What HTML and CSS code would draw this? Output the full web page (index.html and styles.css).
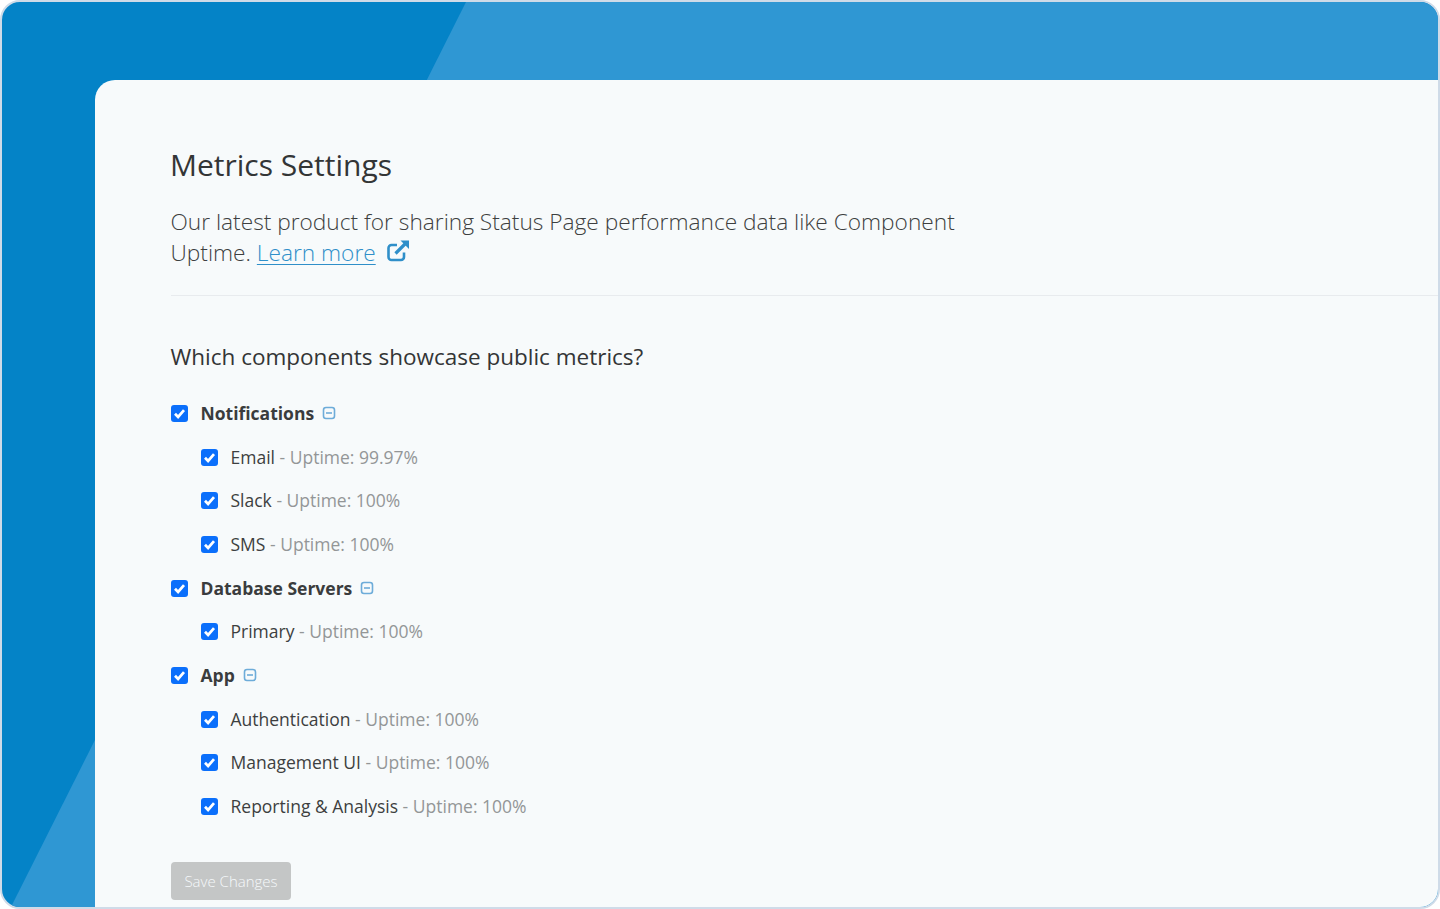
FILE: index.html
```html
<!DOCTYPE html>
<html lang="en">
<head>
  <meta charset="UTF-8">
  <meta name="viewport" content="width=device-width, initial-scale=1.0">
  <title>Metrics Settings</title>
  <link rel="stylesheet" href="styles.css">
</head>
<body>

  <div class="frame">
    <div class="card">
      <h1>Metrics Settings</h1>
      <p class="intro">
        Our latest product for sharing Status Page performance data like Component<br>
        Uptime. <a href="#">Learn more</a>
        <svg class="ext-icon" viewBox="0 0 24 24" width="24" height="24" fill="none" stroke="#2f8fc9" stroke-width="2.6">
          <path d="M18 13.5V18a3 3 0 0 1-3 3H5.5a3 3 0 0 1-3-3V9a3 3 0 0 1 3-3H11"/>
          <path d="M9.5 14.5 19 5" stroke-width="3.2"/>
          <path d="M14.5 1.5H23V10Z" fill="#2f8fc9" stroke="none"/>
        </svg>
      </p>
      <hr>
      <h2>Which components showcase public metrics?</h2>

      <ul class="tree">
        <li class="group">
          <span class="box"><svg viewBox="0 0 17 17"><path d="M4 8.8 7.1 12 13 5.2"/></svg></span>
          <b>Notifications</b>
          <svg class="collapse" viewBox="0 0 14 14"><rect x="1.5" y="1.5" width="11" height="11" rx="2.5"/><path d="M4 7h6"/></svg>
        </li>
        <li class="child">
          <span class="box"><svg viewBox="0 0 17 17"><path d="M4 8.8 7.1 12 13 5.2"/></svg></span>
          <span>Email <em>- Uptime: 99.97%</em></span>
        </li>
        <li class="child">
          <span class="box"><svg viewBox="0 0 17 17"><path d="M4 8.8 7.1 12 13 5.2"/></svg></span>
          <span>Slack <em>- Uptime: 100%</em></span>
        </li>
        <li class="child">
          <span class="box"><svg viewBox="0 0 17 17"><path d="M4 8.8 7.1 12 13 5.2"/></svg></span>
          <span>SMS <em>- Uptime: 100%</em></span>
        </li>
        <li class="group">
          <span class="box"><svg viewBox="0 0 17 17"><path d="M4 8.8 7.1 12 13 5.2"/></svg></span>
          <b>Database Servers</b>
          <svg class="collapse" viewBox="0 0 14 14"><rect x="1.5" y="1.5" width="11" height="11" rx="2.5"/><path d="M4 7h6"/></svg>
        </li>
        <li class="child">
          <span class="box"><svg viewBox="0 0 17 17"><path d="M4 8.8 7.1 12 13 5.2"/></svg></span>
          <span>Primary <em>- Uptime: 100%</em></span>
        </li>
        <li class="group">
          <span class="box"><svg viewBox="0 0 17 17"><path d="M4 8.8 7.1 12 13 5.2"/></svg></span>
          <b>App</b>
          <svg class="collapse" viewBox="0 0 14 14"><rect x="1.5" y="1.5" width="11" height="11" rx="2.5"/><path d="M4 7h6"/></svg>
        </li>
        <li class="child">
          <span class="box"><svg viewBox="0 0 17 17"><path d="M4 8.8 7.1 12 13 5.2"/></svg></span>
          <span>Authentication <em>- Uptime: 100%</em></span>
        </li>
        <li class="child">
          <span class="box"><svg viewBox="0 0 17 17"><path d="M4 8.8 7.1 12 13 5.2"/></svg></span>
          <span>Management UI <em>- Uptime: 100%</em></span>
        </li>
        <li class="child">
          <span class="box"><svg viewBox="0 0 17 17"><path d="M4 8.8 7.1 12 13 5.2"/></svg></span>
          <span>Reporting &amp; Analysis <em>- Uptime: 100%</em></span>
        </li>
      </ul>

      <button class="save" type="button" disabled>Save Changes</button>
    </div>
  </div>

</body>
</html>
```

FILE: styles.css
```css
html, body {
  margin: 0;
  height: 100%;
  background: #fff;
}
body {
  font-family: "Open Sans", sans-serif;
  color: #3d3f40;
  overflow: hidden;
}

/* Blue window with the lighter diagonal band behind the card */
.frame {
  position: relative;
  box-sizing: border-box;
  height: 909px;
  padding: 78px 0 0 93px;
  background: #0483c7;
  border: 2px solid #cfdbe8;
  border-radius: 20px;
  overflow: hidden;
}
.frame::before {
  content: "";
  position: absolute;
  inset: 0;
  background: #2f97d3;
  clip-path: polygon(464px 0, 100% 0, 100% 100%, 9px 100%);
}

.card {
  position: relative;
  box-sizing: border-box;
  height: 840px;
  padding: 62px 0 0 76px;
  background: #f7fafb;
  border-top-left-radius: 20px;
}

h1 {
  margin: 0 0 0 -1px;
  font-size: 30px;
  line-height: 46px;
  font-weight: 400;
  color: #333536;
}
.intro {
  margin: 18px 0 0 -0.5px;
  font-size: 22.7px;
  line-height: 31px;
  font-weight: 300;
  color: #3d3f40;
}
.intro a {
  color: #2f8fc9;
  text-decoration: underline;
  text-underline-offset: 3px;
  text-decoration-thickness: 1px;
}
.ext-icon {
  margin-left: 4.5px;
  vertical-align: -2px;
}
hr {
  margin: 27px 0 0;
  border: 0;
  border-top: 1px solid #e8ebee;
}
h2 {
  margin: 43px 0 0 -0.5px;
  font-size: 22.5px;
  line-height: 36px;
  font-weight: 400;
  color: #333536;
}

.tree {
  list-style: none;
  margin: 16px 0 0;
  padding: 0;
  font-size: 17.5px;
}
.tree li {
  display: flex;
  align-items: center;
  height: 43.7px;
}
.tree .child {
  padding-left: 30px;
}
.tree b {
  font-weight: 700;
  color: #3a3c3d;
}
.tree em {
  font-style: normal;
  color: #939697;
}
.box {
  flex: none;
  display: block;
  width: 17px;
  height: 17px;
  margin: 1px 12.5px 0 0;
  background: #0b6ffb;
  border-radius: 3px;
}
.box svg {
  display: block;
  width: 17px;
  height: 17px;
  fill: none;
  stroke: #fff;
  stroke-width: 2.7;
}
.collapse {
  width: 14px;
  height: 14px;
  margin-left: 8px;
  fill: none;
  stroke: #6dacd9;
  stroke-width: 1.6;
}

.save {
  display: block;
  width: 120px;
  height: 38px;
  margin-top: 34px;
  padding: 0;
  font-family: inherit;
  font-size: 15px;
  font-weight: 300;
  color: #f6f9fb;
  background: #c4c6c6;
  border: 0;
  border-radius: 4px;
}
```
